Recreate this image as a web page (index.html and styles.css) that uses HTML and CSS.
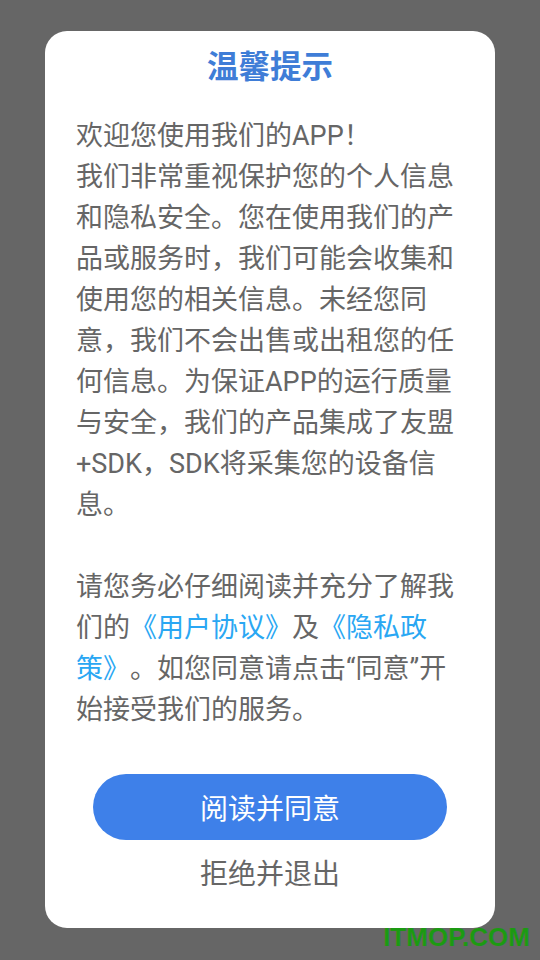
FILE: index.html
```html
<!DOCTYPE html>
<html lang="zh-CN">
<head>
<meta charset="utf-8">
<title>温馨提示</title>
<link rel="stylesheet" href="styles.css">
</head>
<body>
<div class="screen">
  <div class="dialog">
    <h1 class="title">温馨提示</h1>
    <div class="content">
      <p class="para">欢迎您使用我们的APP！<br>我们非常重视保护您的个人信息和隐私安全。您在使用我们的产品或服务时，我们可能会收集和使用您的相关信息。未经您同意，我们不会出售或出租您的任何信息。为保证APP的运行质量与安全，我们的产品集成了友盟+SDK，SDK将采集您的设备信息。</p>
      <p class="para">请您务必仔细阅读并充分了解我们的<span class="link">《用户协议》</span>及<span class="link">《隐私政策》</span>。如您同意请点击“同意”开始接受我们的服务。</p>
    </div>
    <div class="actions">
      <button class="btn-agree">阅读并同意</button>
      <button class="btn-refuse">拒绝并退出</button>
    </div>
  </div>
  <div class="watermark">ITMOP.COM</div>
</div>
</body>
</html>
```
FILE: styles.css
```css
html, body {
  margin: 0;
  padding: 0;
  background: #666666;
}
.screen {
  position: relative;
  width: 540px;
  height: 960px;
  box-sizing: border-box;
  padding: 31px 45px 0 45px;
  font-family: Roboto, "Noto Sans CJK SC", sans-serif;
}
.dialog {
  background: #ffffff;
  border-radius: 22px;
  height: 897px;
  box-sizing: border-box;
  padding: 15px 31px 0 31px;
  display: flex;
  flex-direction: column;
}
.title {
  margin: 0;
  font-size: 31.5px;
  line-height: 44px;
  font-weight: bold;
  color: #3f7dd7;
  text-align: center;
}
.content {
  margin-top: 26px;
  color: #666666;
  font-size: 27px;
  line-height: 41px;
  text-spacing-trim: space-all;
  font-kerning: none;
}
.para {
  margin: 0 0 41px 0;
}
.para:last-child {
  margin-bottom: 0;
}
.link {
  color: #2aa7f3;
}
.actions {
  margin-top: 43px;
  display: flex;
  flex-direction: column;
  align-items: center;
}
.btn-agree {
  width: 354px;
  height: 66px;
  border: none;
  border-radius: 33px;
  background: #3e80e9;
  color: #ffffff;
  font-family: inherit;
  font-size: 28px;
  padding: 0;
}
.btn-refuse {
  margin-top: 15px;
  border: none;
  background: transparent;
  color: #666666;
  font-family: inherit;
  font-size: 28px;
  line-height: 40px;
  padding: 0;
}
.watermark {
  position: absolute;
  right: 10px;
  top: 922px;
  color: #1c9a12;
  font-family: "Liberation Sans", Arial, sans-serif;
  font-weight: bold;
  font-size: 26px;
  line-height: 30px;
}
```
